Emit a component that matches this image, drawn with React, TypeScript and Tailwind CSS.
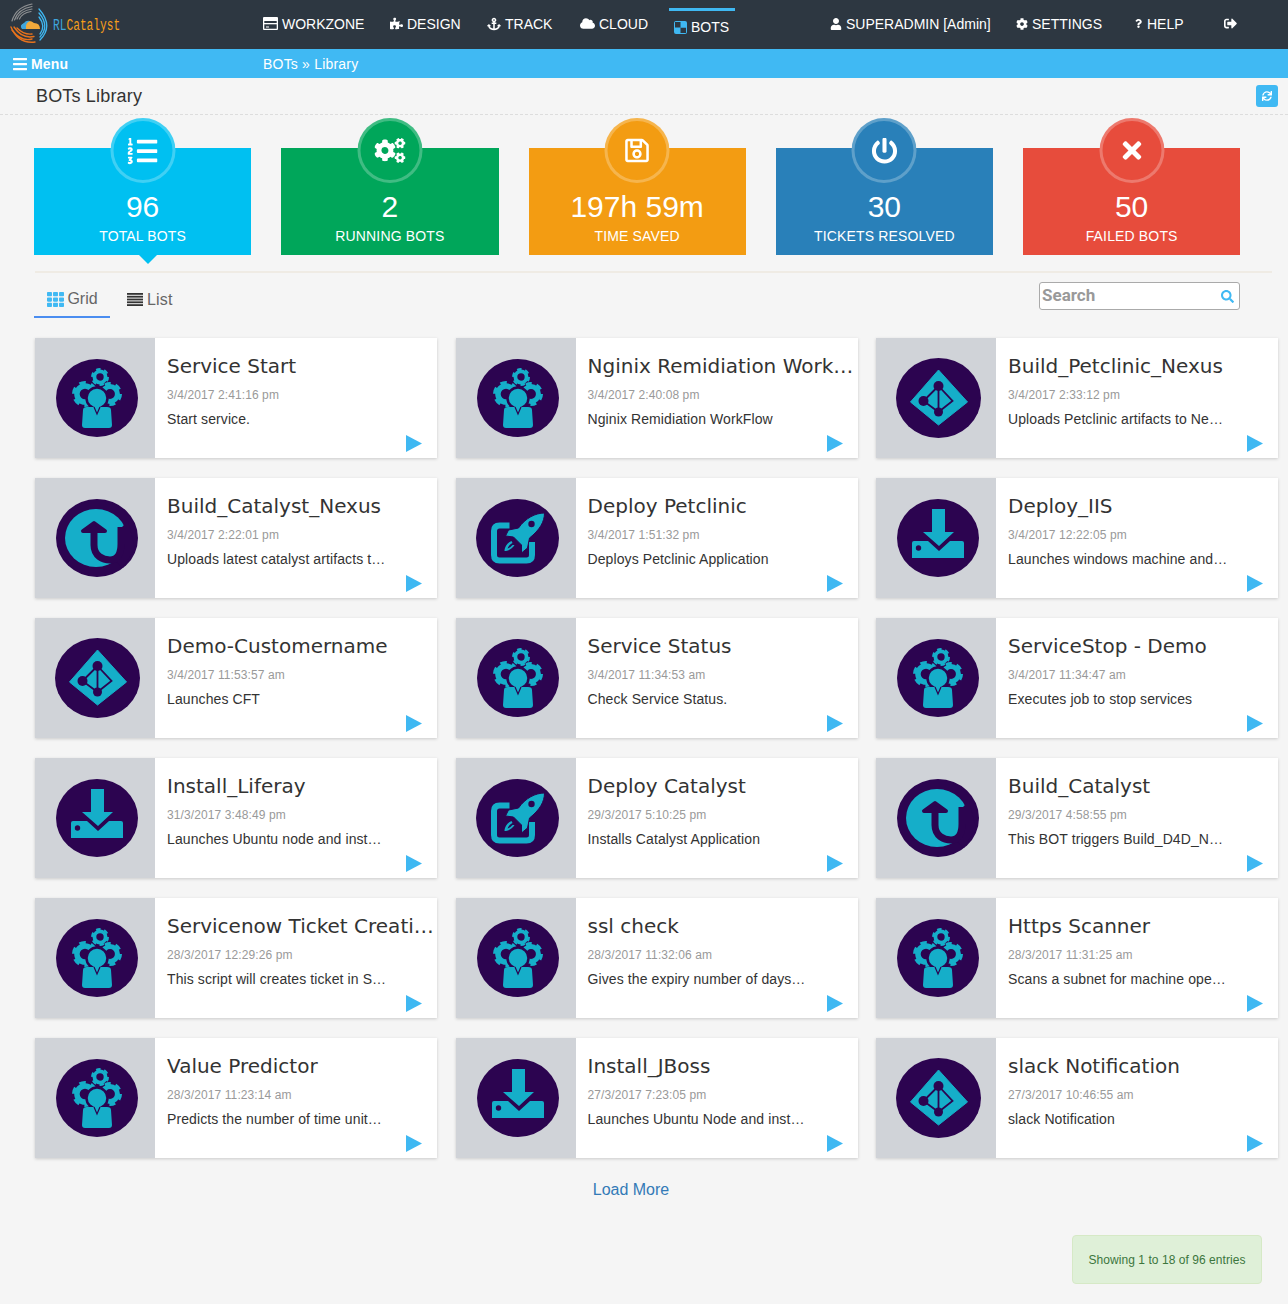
import React from 'react';
import {
  FaAnchor,
  FaBars,
  FaCloud,
  FaCog,
  FaCogs,
  FaListOl,
  FaPowerOff,
  FaPuzzlePiece,
  FaQuestion,
  FaRegSave,
  FaSearch,
  FaSignOutAlt,
  FaSync,
  FaTh,
  FaTimes,
  FaUser,
} from 'react-icons/fa';

const TEAL = '#15aec9';
const DARK = '#2c0450';

const Gear = ({ x, y, r }: { x: number; y: number; r: number }) => (
  <g>
    <circle cx={x} cy={y} r={r * 0.62} fill="none" stroke={TEAL} strokeWidth={r * 0.42} />
    <circle
      cx={x}
      cy={y}
      r={r * 0.88}
      fill="none"
      stroke={TEAL}
      strokeWidth={r * 0.24}
      strokeDasharray={`${r * 0.5} ${r * 0.42}`}
    />
  </g>
);

const IconFrame = ({ w = 82, h = 78, children }: { w?: number; h?: number; children: React.ReactNode }) => (
  <svg width={w} height={h} viewBox={`${-w / 2} ${-h / 2} ${w} ${h}`}>
    <ellipse rx={w / 2} ry={h / 2} fill={DARK} />
    {children}
  </svg>
);

const ServiceIcon = () => (
  <IconFrame>
    <Gear x={3} y={-21} r={9} />
    <Gear x={-12} y={-4} r={13} />
    <Gear x={13} y={-4} r={12} />
    <circle r="10.5" fill={TEAL} stroke={DARK} strokeWidth="2.5" />
    <path d="M-14 12 Q-14 9 -10 9 L10 9 Q14 9 14 12 L15 27 Q15 30 12 30 L-12 30 Q-15 30 -15 27 Z" fill={TEAL} />
    <path d="M-3 9 L0 16 L3 9" fill="none" stroke={DARK} strokeWidth="1.2" />
  </IconFrame>
);

const DiamondIcon = () => (
  <IconFrame w={85} h={80}>
    <path d="M0 -28 L29 4 L0 27 L-28 4 Z" fill={TEAL} stroke={TEAL} strokeLinejoin="round" />
    <path d="M0 -12 L-15 3 L0 14 L14 3 Z M0 -12 L0 14" fill="none" stroke={DARK} strokeWidth="1.8" />
    <circle cx="0" cy="-12" r="5" fill={DARK} />
    <circle cx="-15" cy="3" r="5" fill={DARK} />
    <circle cx="0" cy="14" r="4.5" fill={DARK} />
  </IconFrame>
);

const UploadIcon = () => (
  <IconFrame>
    <ellipse cx="-1" cy="0" rx="31" ry="29" fill={TEAL} />
    <path d="M24 -10 L31 -17 L38 10 L26 30 L18 23 C24 18 26 10 26 0 Z" fill={DARK} />
    <path
      d="M-3 -8 L-3 7 C-3 18 6 22 13 22 C21 22 24 15 24 6 L24 -11"
      fill="none"
      stroke={DARK}
      strokeWidth="7"
    />
    <path d="M-3 -15 L-14 -7 L8 -7 Z" fill={DARK} stroke={DARK} strokeWidth="4" strokeLinejoin="round" />
  </IconFrame>
);

const RocketIcon = () => (
  <IconFrame w={83}>
    <path
      d="M-8 -12.5 L-18 -12.5 Q-23.5 -12.5 -23.5 -7 L-23.5 17 Q-23.5 22.5 -18 22.5 L9 22.5 Q14.5 22.5 14.5 17 L14.5 4"
      fill="none"
      stroke={TEAL}
      strokeWidth="6"
    />
    <path
      d="M27 -25 C18 -25 8 -20 1 -10 L-9 -8 L-12 -2 L-4 -1 L4 7 L4 15 L10 10 L12 0 C22 -8 27 -16 27 -25 Z"
      fill={TEAL}
      stroke={DARK}
      strokeWidth="1"
    />
    <circle cx="14" cy="-14" r="3.2" fill={DARK} />
    <path d="M-6 3 C-11 5 -13 10 -13 13 C-10 13 -5 11 -3 7 L-5 7 C-7 9 -8 10 -10 10.5 C-9 8 -7 6 -5 5 Z" fill={TEAL} />
  </IconFrame>
);

const DownloadIcon = () => (
  <IconFrame>
    <path d="M-6 -29 L7 -29 L7 -6 L16 -6 L1 8 L-15 -6 L-6 -6 Z" fill={TEAL} />
    <path d="M-26 5 Q-26 3 -24 3 L-10 3 L1 13 L12 3 L24 3 Q26 3 26 5 L26 20 L-26 20 Z" fill={TEAL} />
    <circle cx="-19.5" cy="10" r="2.7" fill={DARK} />
  </IconFrame>
);

const icons = {
  service: ServiceIcon,
  diamond: DiamondIcon,
  upload: UploadIcon,
  rocket: RocketIcon,
  download: DownloadIcon,
};

type Bot = { icon: keyof typeof icons; title: string; date: string; desc: string };

const bots: Bot[] = [
  { icon: 'service', title: 'Service Start', date: '3/4/2017 2:41:16 pm', desc: 'Start service.' },
  { icon: 'service', title: 'Nginix Remidiation Work…', date: '3/4/2017 2:40:08 pm', desc: 'Nginix Remidiation WorkFlow' },
  { icon: 'diamond', title: 'Build_Petclinic_Nexus', date: '3/4/2017 2:33:12 pm', desc: 'Uploads Petclinic artifacts to Ne…' },
  { icon: 'upload', title: 'Build_Catalyst_Nexus', date: '3/4/2017 2:22:01 pm', desc: 'Uploads latest catalyst artifacts t…' },
  { icon: 'rocket', title: 'Deploy Petclinic', date: '3/4/2017 1:51:32 pm', desc: 'Deploys Petclinic Application' },
  { icon: 'download', title: 'Deploy_IIS', date: '3/4/2017 12:22:05 pm', desc: 'Launches windows machine and…' },
  { icon: 'diamond', title: 'Demo-Customername', date: '3/4/2017 11:53:57 am', desc: 'Launches CFT' },
  { icon: 'service', title: 'Service Status', date: '3/4/2017 11:34:53 am', desc: 'Check Service Status.' },
  { icon: 'service', title: 'ServiceStop - Demo', date: '3/4/2017 11:34:47 am', desc: 'Executes job to stop services' },
  { icon: 'download', title: 'Install_Liferay', date: '31/3/2017 3:48:49 pm', desc: 'Launches Ubuntu node and inst…' },
  { icon: 'rocket', title: 'Deploy Catalyst', date: '29/3/2017 5:10:25 pm', desc: 'Installs Catalyst Application' },
  { icon: 'upload', title: 'Build_Catalyst', date: '29/3/2017 4:58:55 pm', desc: 'This BOT triggers Build_D4D_N…' },
  { icon: 'service', title: 'Servicenow Ticket Creati…', date: '28/3/2017 12:29:26 pm', desc: 'This script will creates ticket in S…' },
  { icon: 'service', title: 'ssl check', date: '28/3/2017 11:32:06 am', desc: 'Gives the expiry number of days…' },
  { icon: 'service', title: 'Https Scanner', date: '28/3/2017 11:31:25 am', desc: 'Scans a subnet for machine ope…' },
  { icon: 'service', title: 'Value Predictor', date: '28/3/2017 11:23:14 am', desc: 'Predicts the number of time unit…' },
  { icon: 'download', title: 'Install_JBoss', date: '27/3/2017 7:23:05 pm', desc: 'Launches Ubuntu Node and inst…' },
  { icon: 'diamond', title: 'slack Notification', date: '27/3/2017 10:46:55 am', desc: 'slack Notification' },
];

const stats = [
  { value: '96', label: 'TOTAL BOTS', bg: 'bg-[#00c0f1]', icon: <FaListOl size={30} />, caret: true },
  { value: '2', label: 'RUNNING BOTS', bg: 'bg-[#00a65a]', icon: <FaCogs size={31} /> },
  { value: '197h 59m', label: 'TIME SAVED', bg: 'bg-[#f39c12]', icon: <FaRegSave size={27} /> },
  { value: '30', label: 'TICKETS RESOLVED', bg: 'bg-[#2980b9]', icon: <FaPowerOff size={26} /> },
  { value: '50', label: 'FAILED BOTS', bg: 'bg-[#e74c3c]', icon: <FaTimes size={27} /> },
];

const Logo = () => (
  <svg width="44" height="44" viewBox="8 4 44 44" fill="none" strokeLinecap="round">
    <g stroke="#8f9193" strokeWidth="1.2">
      <path d="M11 22 Q15 8 31 5" />
      <path d="M13.5 21 Q17 10 31 7.5" />
      <path d="M16 20 Q19 12 31 10" />
      <path d="M18.5 20 Q21 14 30 12.5" />
    </g>
    <g stroke="#3fb8f2" strokeWidth="1.3">
      <path d="M38 10 Q53 27 39 41" />
      <path d="M38 14 Q49 27 39 38" />
      <path d="M38 18 Q45 27 39 35" />
    </g>
    <g stroke="#e8731c" strokeWidth="1.4">
      <path d="M10 28 Q17 45 34 43" />
      <path d="M11 31 Q20 43 31 40" />
      <path d="M13 28 Q21 40 33 37.5" />
      <path d="M16 29 Q23 36 31 35" />
    </g>
    <path d="M21 30 Q20 24 25 24 Q28 20 33 24 Q39 24 39 30 Z" fill="#f2a93b" />
    <path d="M21 30 Q18 26 23 24 Q25 21 29 22 Q24 24 25 30 Z" fill="#3fa5dc" />
  </svg>
);

const BotsIcon = () => (
  <svg width="13" height="13" viewBox="0 0 13 13">
    <rect width="13" height="13" rx="2" fill="#3fb8f2" />
    <rect x="1" y="1" width="5.5" height="5.5" fill="#2d3741" />
    <rect x="6.5" y="6.5" width="5.5" height="5.5" fill="#2d3741" />
    <rect x="7" y="1" width="5" height="5.5" fill="#3fb8f2" />
  </svg>
);

const WorkzoneIcon = () => (
  <svg width="15" height="13" viewBox="0 0 15 13">
    <path d="M1 0 H14 Q15 0 15 1 V12 Q15 13 14 13 H1 Q0 13 0 12 V1 Q0 0 1 0 Z M1.3 4 V11.7 H13.7 V4 Z" fill="#fff" fillRule="evenodd" />
    <rect x="1" y="6" width="13" height="1.3" fill="#fff" />
    <rect x="3" y="9.5" width="3" height="1" fill="#fff" />
  </svg>
);

const ListIcon = () => (
  <svg width="16" height="13" viewBox="0 0 16 13" fill="#333">
    <rect y="0" width="16" height="1.8" />
    <rect y="2.8" width="16" height="1.8" />
    <rect y="5.6" width="16" height="1.8" />
    <rect y="8.4" width="16" height="1.8" />
    <rect y="11.2" width="16" height="1.8" />
  </svg>
);

const NavItem = ({ width, icon, label }: { width: string; icon: React.ReactNode; label: string }) => (
  <div className={`flex items-center gap-[4px] pb-[2px] ${width}`}>
    {icon}
    <span>{label}</span>
  </div>
);

const BotCard = ({ bot }: { bot: Bot }) => {
  const Icon = icons[bot.icon];
  return (
    <div className="flex h-[120px] w-[402px] bg-white shadow-[0_1px_3px_rgba(0,0,0,0.18)]">
      <div className="flex w-[120px] shrink-0 items-center justify-center bg-[#d0d3d8] pl-1">
        <Icon />
      </div>
      <div className="flex min-w-0 flex-1 flex-col pl-3 pr-[14px]">
        <div className="mt-4 whitespace-nowrap font-['DejaVu_Sans',sans-serif] text-[20px] leading-6 text-[#333]">
          {bot.title}
        </div>
        <div className="mt-[9px] text-xs leading-4 tracking-[0.1px] text-[#999]">{bot.date}</div>
        <div className="mt-[6px] whitespace-nowrap text-sm leading-5 tracking-[0.1px] text-[#333]">{bot.desc}</div>
        <svg className="mt-auto mb-[6px] self-end" width="17" height="17" viewBox="0 0 17 17">
          <path d="M0 0 L16 8.5 L0 17 Z" fill="#3fb8f2" />
        </svg>
      </div>
    </div>
  );
};

export default function App() {
  return (
    <div className="min-h-[1304px] bg-[#f5f5f5] font-['Liberation_Sans',sans-serif]">
      <header className="flex h-[49px] items-center bg-[#2d3741] text-sm text-white">
        <div className="flex w-[263px] items-center pl-[9px]">
          <Logo />
          <span className="mt-[3px] inline-block origin-left scale-x-[0.7] whitespace-nowrap font-['Liberation_Mono',monospace] text-base">
            <span className="text-[#3fa5dc]">RL</span>
            <span className="text-[#f59e1b]">Catalyst</span>
          </span>
        </div>
        <NavItem width="w-[127px]" icon={<WorkzoneIcon />} label="WORKZONE" />
        <NavItem width="w-[97px]" icon={<FaPuzzlePiece size={13} />} label="DESIGN" />
        <NavItem width="w-[93px]" icon={<FaAnchor size={14} />} label="TRACK" />
        <NavItem width="w-[89px]" icon={<FaCloud size={15} />} label="CLOUD" />
        <div className="flex h-full w-[161px] items-start">
          <div className="mt-2 flex h-[41px] w-[66px] items-center gap-[4px] border-t-[3px] border-[#3fb8f2] pb-[6px] pl-[5px]">
            <BotsIcon />
            <span>BOTS</span>
          </div>
        </div>
        <NavItem width="w-[186px]" icon={<FaUser size={12} />} label="SUPERADMIN [Admin]" />
        <NavItem width="w-[118px]" icon={<FaCog size={12} />} label="SETTINGS" />
        <NavItem width="w-[90px]" icon={<FaQuestion size={9} />} label="HELP" />
        <FaSignOutAlt size={13} className="mb-[2px]" />
      </header>

      <div className="flex h-[29px] items-center bg-[#40b9f3] text-sm text-white">
        <div className="flex w-[263px] items-center gap-[3px] pl-3 font-bold tracking-[0.2px]">
          <FaBars size={16} />
          <span>Menu</span>
        </div>
        <span className="tracking-[0.2px]">BOTs » Library</span>
      </div>

      <div className="flex h-[37px] items-center justify-between border-b border-dashed border-[#ddd] pl-9 pr-[10px]">
        <h1 className="text-lg tracking-[0.17px] text-[#333]">BOTs Library</h1>
        <button className="flex h-[22px] w-[22px] items-center justify-center rounded-[3px] bg-[#40b9f3] text-white">
          <FaSync size={10} />
        </button>
      </div>

      <div className="mt-[33px] flex gap-[30px] pl-[34px]">
        {stats.map((s) => (
          <div key={s.label} className={`relative h-[107px] w-[217.25px] pt-[42px] text-center text-white ${s.bg}`}>
            <div
              className={`absolute left-1/2 top-[-30px] flex h-[65px] w-[65px] -translate-x-1/2 items-center justify-center rounded-full border-[3px] border-white/25 ${s.bg}`}
            >
              {s.icon}
            </div>
            <div className="text-[30px] leading-[34px]">{s.value}</div>
            <div className="mt-[2px] text-sm leading-5 tracking-[0.15px]">{s.label}</div>
            {s.caret && (
              <div className="absolute left-[105px] top-full h-0 w-0 border-x-[9.5px] border-t-[9px] border-x-transparent border-t-[#00c0f1]" />
            )}
          </div>
        ))}
      </div>

      <div className="ml-[35px] mr-4 mt-4 h-[2px] bg-[#efebe4]" />

      <div className="mt-[9px] flex h-[36px] justify-between pl-[34px] pr-[48px]">
        <div className="flex text-base text-[#666]">
          <div className="flex h-[36px] w-[76px] items-center justify-center gap-[3px] border-b-2 border-[#4a8df0] pl-[1px]">
            <FaTh size={17} className="text-[#40b9f3]" />
            <span>Grid</span>
          </div>
          <div className="ml-[17px] flex h-[35px] items-center gap-[4px] tracking-[0.2px]">
            <ListIcon />
            <span>List</span>
          </div>
        </div>
        <div className="relative h-[28px] w-[201px]">
          <input
            placeholder="Search"
            className="h-full w-full rounded-[3px] border border-[#aaa] bg-white pb-[2px] pl-[2px] font-['Roboto',sans-serif] text-[17px] font-bold outline-none placeholder:text-[#999]"
          />
          <FaSearch size={13} className="absolute right-[6px] top-[8px] text-[#40b9f3]" />
        </div>
      </div>

      <div className="mt-[20px] grid grid-cols-[402px_402px_402px] gap-x-[18.5px] gap-y-5 pl-[35px]">
        {bots.map((bot) => (
          <BotCard key={bot.title} bot={bot} />
        ))}
      </div>

      <div className="mt-[21px] w-[1262px] text-center text-base leading-[22px] text-[#337ab7]">Load More</div>

      <div className="mt-[34px] flex justify-end pr-[26px]">
        <div className="flex h-[49px] w-[190px] items-center justify-center rounded border border-[#d6e9c6] bg-[#dff0d8] text-xs tracking-[0.05px] text-[#3c763d]">
          Showing 1 to 18 of 96 entries
        </div>
      </div>
    </div>
  );
}
